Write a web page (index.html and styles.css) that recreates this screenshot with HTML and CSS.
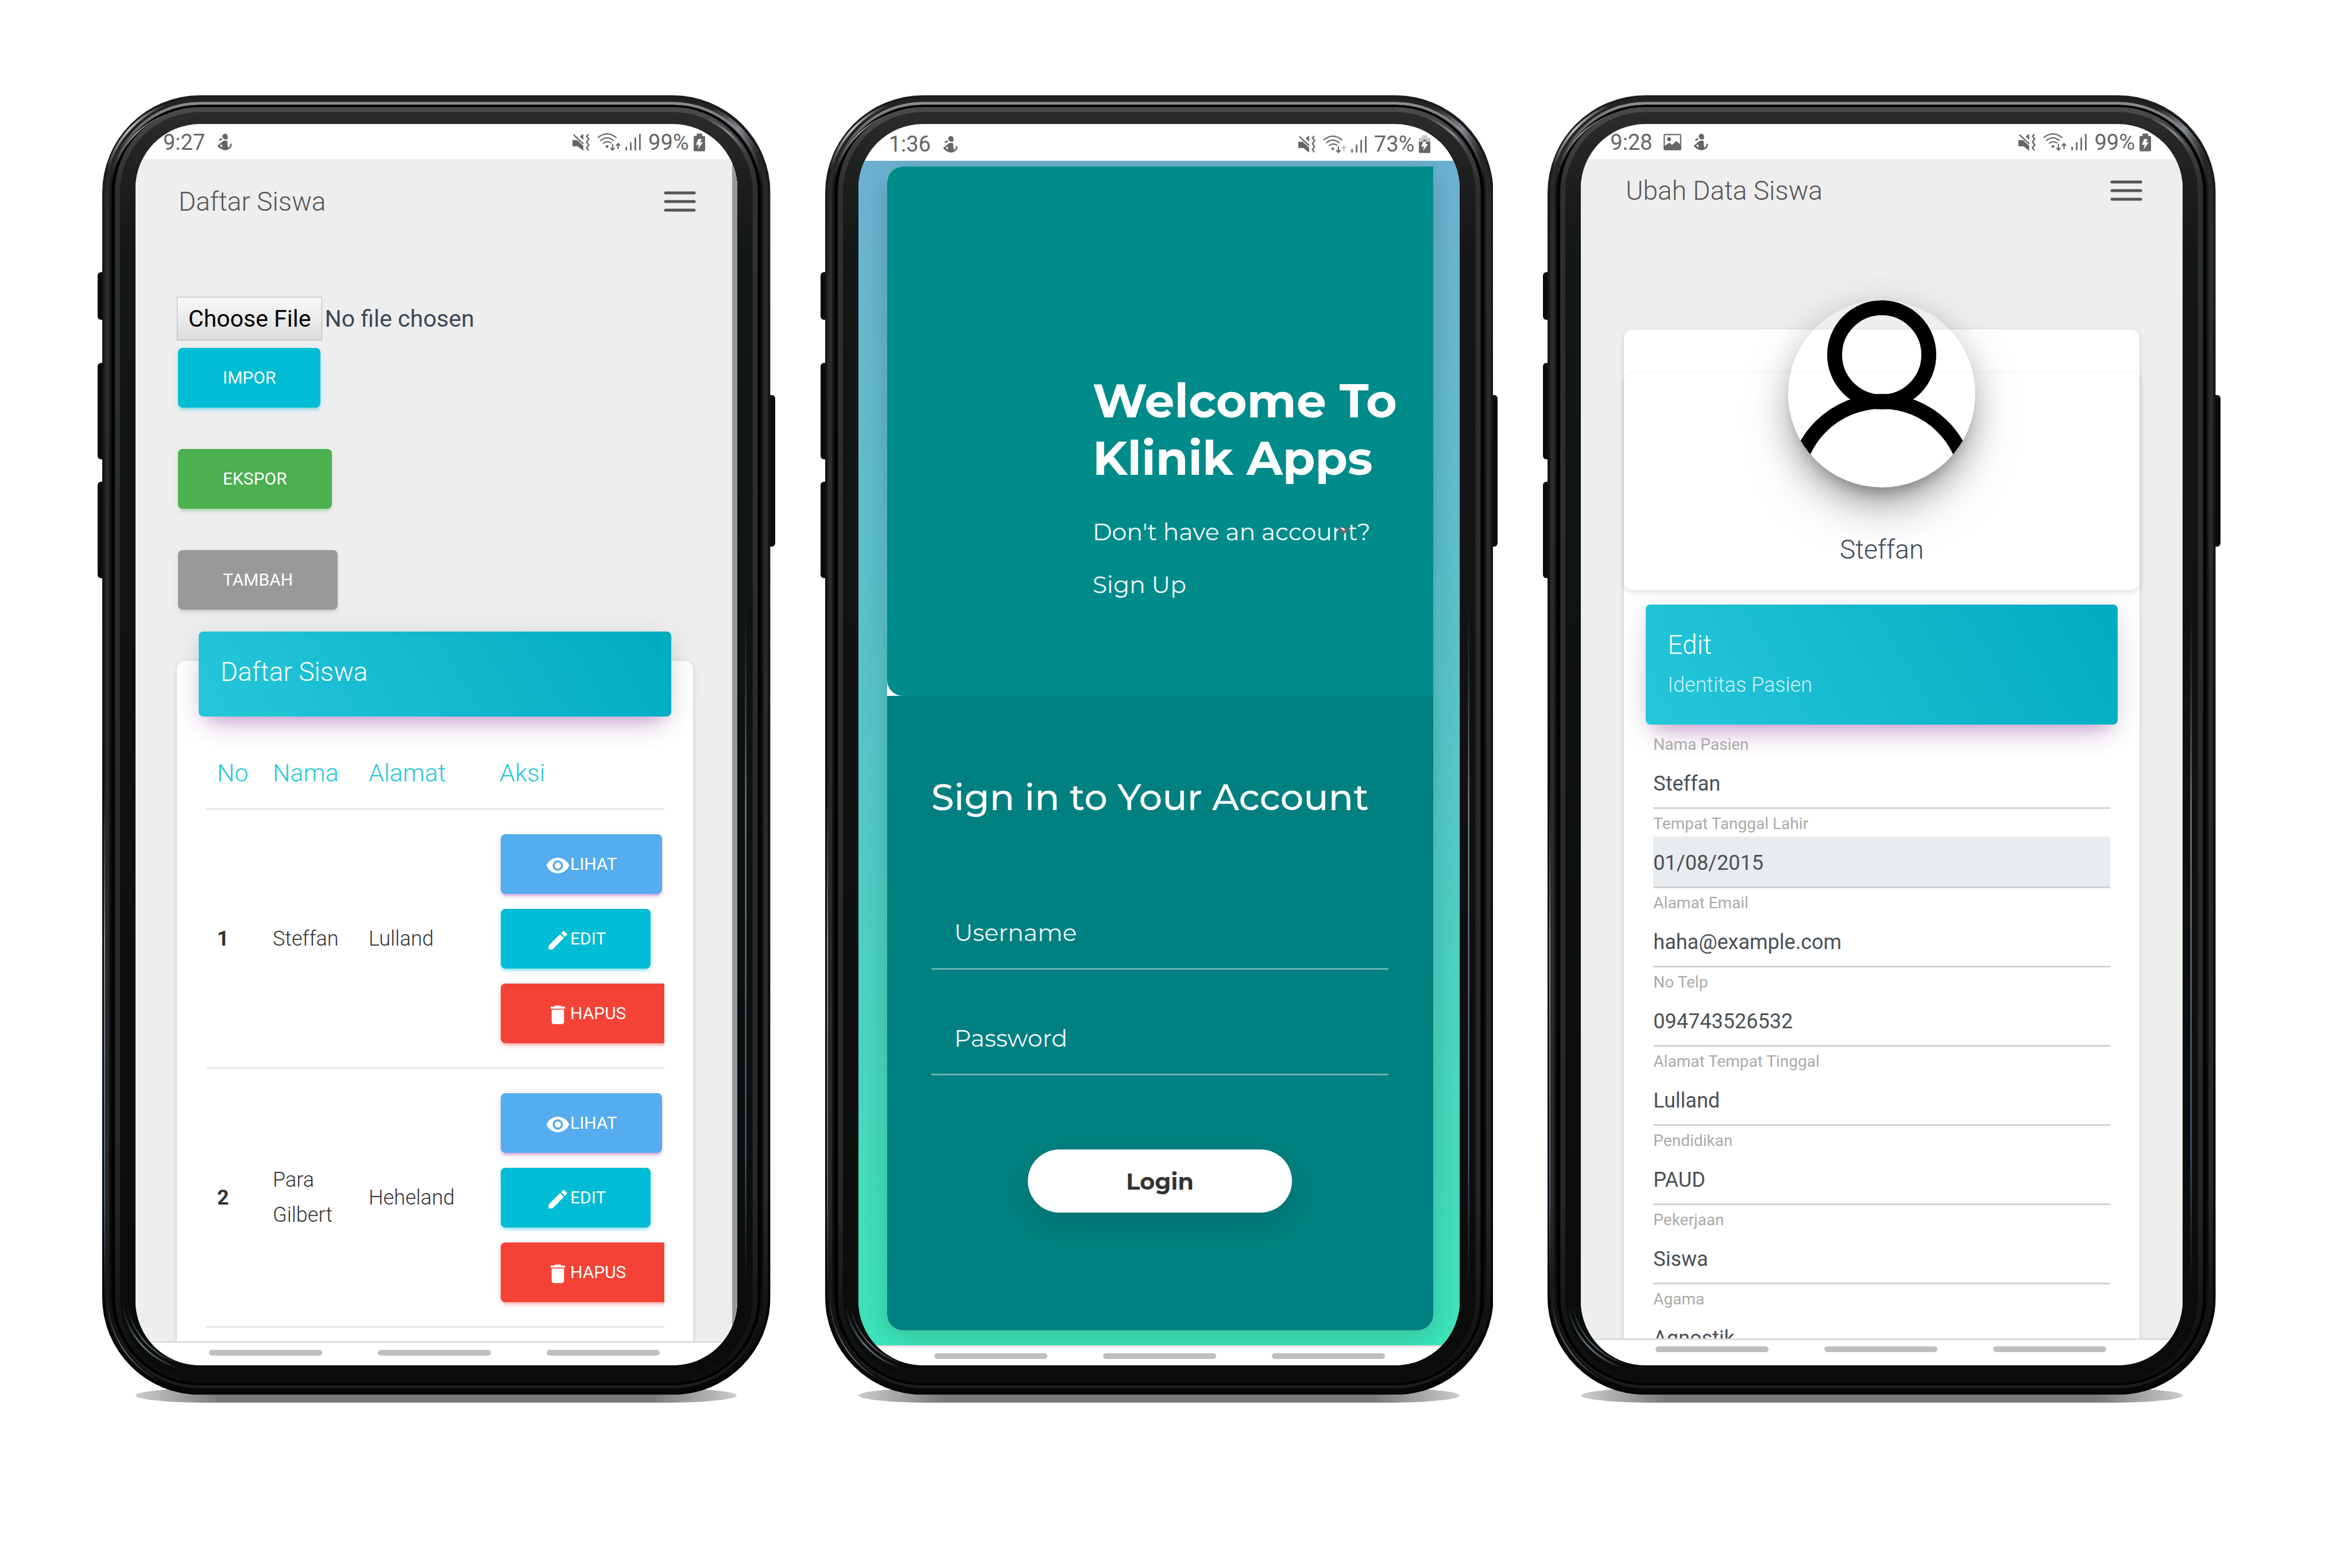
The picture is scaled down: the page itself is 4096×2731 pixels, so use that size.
FILE: index.html
```html
<!DOCTYPE html>
<html lang="id">
<head>
<meta charset="utf-8">
<meta name="viewport" content="width=device-width, initial-scale=1">
<title>Klinik Apps</title>
<link rel="stylesheet" href="styles.css">
</head>
<body>
<svg class="sprite" aria-hidden="true">
  <defs>
    <linearGradient id="g-base" x1="0" y1="0" x2="0" y2="1">
      <stop offset="0" stop-color="#1c1c1c"/><stop offset=".5" stop-color="#0e0f0f"/><stop offset="1" stop-color="#030303"/>
    </linearGradient>
    <linearGradient id="g-rim" x1="0" y1="0" x2="0" y2="1">
      <stop offset="0" stop-color="#222"/><stop offset=".1" stop-color="#2a2b2b"/><stop offset=".85" stop-color="#262828"/><stop offset="1" stop-color="#070707"/>
    </linearGradient>
    <linearGradient id="g-shine" x1="0" y1="0" x2="0" y2="1">
      <stop offset="0" stop-color="#8f8b8c"/><stop offset=".02" stop-color="#6a6869"/><stop offset=".06" stop-color="#151616"/><stop offset=".9" stop-color="#0a0a0a"/><stop offset="1" stop-color="#1d1d1d"/>
    </linearGradient>
    <linearGradient id="g-lip" x1="0" y1="0" x2="0" y2="1">
      <stop offset="0" stop-color="#4a4a4a"/><stop offset=".06" stop-color="#2e3030"/><stop offset=".85" stop-color="#262828"/><stop offset="1" stop-color="#0c0d0d"/>
    </linearGradient>
    <linearGradient id="g-bezel" x1="0" y1="0" x2="0" y2="1">
      <stop offset="0" stop-color="#2c2c2c"/><stop offset=".05" stop-color="#1e1f1f"/><stop offset=".12" stop-color="#131616"/><stop offset="1" stop-color="#0a0c0c"/>
    </linearGradient>
    <linearGradient id="g-corner-r" x1="0" y1="0" x2="1" y2="1">
      <stop offset="0" stop-color="#9aa0a8" stop-opacity="0"/><stop offset=".5" stop-color="#9aa0ac" stop-opacity=".8"/><stop offset="1" stop-color="#5a5f68" stop-opacity="0"/>
    </linearGradient>
    <linearGradient id="g-corner-l" x1="0" y1="1" x2="1" y2="0">
      <stop offset="0" stop-color="#fff" stop-opacity="0"/><stop offset=".5" stop-color="#e8eaee" stop-opacity=".8"/><stop offset="1" stop-color="#fff" stop-opacity="0"/>
    </linearGradient>
    <linearGradient id="g-corner-b" x1="0" y1="0" x2="1" y2="1">
      <stop offset="0" stop-color="#8fa6bf" stop-opacity="0"/><stop offset=".5" stop-color="#a9b8c8" stop-opacity=".6"/><stop offset="1" stop-color="#fff" stop-opacity="0"/>
    </linearGradient>
    <linearGradient id="g-streak" x1="0" y1="0" x2="0" y2="1">
      <stop offset="0" stop-color="#8ea2c8" stop-opacity="0"/><stop offset=".3" stop-color="#c4cbd8" stop-opacity=".7"/><stop offset=".8" stop-color="#6f8cc0" stop-opacity=".7"/><stop offset="1" stop-color="#6f8cc0" stop-opacity="0"/>
    </linearGradient>
  </defs>
  <symbol id="frame" viewBox="0 0 1164 2264" preserveAspectRatio="none">
    <rect width="1164" height="2264" rx="170" fill="url(#g-base)"/>
    <rect x="9" y="9" width="1146" height="2246" rx="161" fill="none" stroke="url(#g-rim)" stroke-width="9"/>
    <rect x="15" y="14" width="1134" height="2236" rx="155" fill="none" stroke="url(#g-shine)" stroke-width="5"/>
    <rect x="19" y="19" width="1126" height="2226" rx="151" fill="none" stroke="#020202" stroke-width="5"/>
    <rect x="27" y="25" width="1110" height="2214" rx="143" fill="none" stroke="url(#g-lip)" stroke-width="9"/>
    <rect x="31" y="29" width="1102" height="2206" rx="139" fill="url(#g-bezel)"/>
    <path d="M1060 24A162 162 0 0 1 1143 110" fill="none" stroke="url(#g-corner-r)" stroke-width="9"/>
    <path d="M1050 40A145 145 0 0 1 1123 105" fill="none" stroke="url(#g-corner-r)" stroke-width="4"/>
    <path d="M9 130A166 166 0 0 1 110 17" fill="none" stroke="url(#g-corner-l)" stroke-width="4"/>
    <path d="M24 120A150 150 0 0 1 112 33" fill="none" stroke="url(#g-corner-l)" stroke-width="2"/>
    <path d="M36 2110A136 136 0 0 0 130 2216" fill="none" stroke="url(#g-corner-b)" stroke-width="3"/>
    <path d="M44 2110A128 128 0 0 0 134 2209" fill="none" stroke="url(#g-corner-b)" stroke-width="2"/>
    <path d="M9 2080A166 166 0 0 0 100 2240" fill="none" stroke="url(#g-corner-b)" stroke-width="2"/>
    <rect x="3" y="1200" width="2" height="900" fill="url(#g-streak)"/>
    <rect x="1120" y="880" width="2" height="1200" fill="url(#g-streak)"/>
  </symbol>
  <symbol id="i-person" viewBox="0 0 82 95">
    <circle cx="44" cy="15" r="15"/><path d="M33 20H60L58 32H40Z"/>
    <ellipse cx="18" cy="32" rx="11" ry="5" transform="rotate(-25 18 32)"/>
    <path fill-rule="evenodd" d="M30 43Q44 34 58 43V62Q58 74 64 78Q72 76 73 61A4.500 4.500 0 0 1 82 61Q82 80 66 87Q50 98 32 92Q12 85 0 69ZM24 59L15 69L27 78Q29 68 24 59Z"/>
  </symbol>
  <symbol id="i-picture" viewBox="0 0 100 93">
    <rect x="4" y="4" width="92" height="85" rx="4" fill="none" stroke="currentColor" stroke-width="7"/>
    <circle cx="31" cy="30" r="11"/><path d="M5 68L34 50L48 63L72 40L96 62V90H5Z"/>
  </symbol>
  <symbol id="i-mute" viewBox="0 0 99 99">
    <path d="M0 36H26L62 69V98L30 72H0Z"/><path d="M42 16L62 0V35Z"/>
    <path d="M6 5L62 58M92 3L81 14L94 30L81 47L94 64L81 80L92 96" fill="none" stroke="currentColor" stroke-width="8" stroke-linejoin="round"/>
  </symbol>
  <symbol id="i-wifi" viewBox="0 0 134 103">
    <g fill="none" stroke="currentColor" stroke-width="7" stroke-linecap="round">
      <path d="M4 25Q56 -17 108 25M19 42Q56 12 92 42M35 58Q56 42 79 56"/>
      <path d="M88 62V98M76 85L88 98L100 85" stroke-linecap="butt"/>
    </g>
    <circle cx="56" cy="77" r="8"/>
  </symbol>
  <symbol id="i-up" viewBox="0 0 134 103">
    <path d="M120 92V60M108 73L120 60L132 73" fill="none" stroke="currentColor" stroke-width="7"/>
  </symbol>
  <symbol id="i-signal" viewBox="0 0 88 95">
    <path d="M5 78V91M31 52V91M57 26V91M83 4V91" fill="none" stroke="currentColor" stroke-width="9" stroke-linecap="round"/>
  </symbol>
  <symbol id="i-battery" viewBox="0 0 67 104">
    <path fill-rule="evenodd" d="M18 0H50V14H61Q67 14 67 20V98Q67 104 61 104H6Q0 104 0 98V20Q0 14 6 14H18ZM27 33L14 66H30L24 92L54 52H38L47 33Z"/>
  </symbol>
  <symbol id="i-battery-part" viewBox="0 0 67 104">
    <path fill="#c8c8c8" d="M18 0H50V14H61Q67 14 67 20V38H0V20Q0 14 6 14H18Z"/>
    <path d="M0 38H67V98Q67 104 61 104H6Q0 104 0 98Z"/><path d="M27 27H46L39 38H23Z"/>
    <path fill="#fff" d="M25 38L14 66H30L24 92L54 52H38L44 38Z"/>
  </symbol>
  <symbol id="i-menu" viewBox="0 0 56 36">
    <path d="M3 3H53M3 18H53M3 33H53" stroke="#555" stroke-width="5" stroke-linecap="round"/>
  </symbol>
  <symbol id="i-eye" viewBox="0 0 24 24"><path d="M12 4.500C7 4.500 2.730 7.610 1 12c1.730 4.390 6 7.500 11 7.500s9.270-3.110 11-7.500c-1.730-4.390-6-7.500-11-7.500zM12 17c-2.760 0-5-2.240-5-5s2.240-5 5-5 5 2.240 5 5-2.240 5-5 5zm0-8c-1.660 0-3 1.340-3 3s1.340 3 3 3 3-1.340 3-3-1.340-3-3-3z"/></symbol>
  <symbol id="i-pen" viewBox="0 0 24 24"><path d="M3 17.250V21h3.750L17.810 9.940l-3.750-3.750L3 17.250zM20.710 7.040c.39-.39.39-1.020 0-1.410l-2.340-2.340c-.39-.39-1.020-.39-1.410 0l-1.830 1.830 3.750 3.750 1.830-1.830z"/></symbol>
  <symbol id="i-bin" viewBox="0 0 24 24"><path d="M6 19c0 1.100.9 2 2 2h8c1.100 0 2-.9 2-2V7H6v12zM19 4h-3.500l-1-1h-5l-1 1H5v2h14V4z"/></symbol>
</svg>

<main class="stage">

  <section class="phone" aria-label="Daftar Siswa">
    <span class="ground"></span><span class="key key-a"></span><span class="key key-b"></span><span class="key key-c"></span><span class="key key-d"></span>
    <svg class="frame"><use href="#frame"/></svg>
    <div class="screen">
      <div class="status">
        <span>9:27</span>
        <svg class="ic-person"><use href="#i-person"/></svg>
        <div class="status-right">
          <svg class="ic-mute"><use href="#i-mute"/></svg>
          <svg class="ic-wifi"><use href="#i-wifi"/><use href="#i-up"/></svg>
          <svg class="ic-signal"><use href="#i-signal"/></svg>
          <span>99%</span>
          <svg class="ic-battery"><use href="#i-battery"/></svg>
        </div>
      </div>
      <div class="view view-list">
        <header class="bar bar-tall">
          <h1 class="bar-title">Daftar Siswa</h1>
          <button class="menu" type="button" aria-label="Menu"><svg><use href="#i-menu"/></svg></button>
        </header>
        <div class="tools">
          <input class="file" type="file" aria-label="File">
          <button class="btn btn-cyan" type="button">IMPOR</button>
          <button class="btn btn-green" type="button">EKSPOR</button>
          <button class="btn btn-grey" type="button">TAMBAH</button>
        </div>
        <div class="card list-card">
          <div class="card-head"><h2>Daftar Siswa</h2></div>
          <div class="table-wrap">
            <table class="table">
              <colgroup><col class="c-no"><col class="c-name"><col class="c-addr"><col class="c-act"></colgroup>
              <thead><tr><th>No</th><th>Nama</th><th>Alamat</th><th>Aksi</th></tr></thead>
              <tbody>
                <tr>
                  <td class="num">1</td><td>Steffan</td><td>Lulland</td>
                  <td><div class="acts">
                    <button class="btn btn-blue" type="button"><svg><use href="#i-eye"/></svg>LIHAT</button>
                    <button class="btn btn-cyan" type="button"><svg><use href="#i-pen"/></svg>EDIT</button>
                    <button class="btn btn-red" type="button"><svg><use href="#i-bin"/></svg>HAPUS</button>
                  </div></td>
                </tr>
                <tr>
                  <td class="num">2</td><td>Para Gilbert</td><td>Heheland</td>
                  <td><div class="acts">
                    <button class="btn btn-blue" type="button"><svg><use href="#i-eye"/></svg>LIHAT</button>
                    <button class="btn btn-cyan" type="button"><svg><use href="#i-pen"/></svg>EDIT</button>
                    <button class="btn btn-red" type="button"><svg><use href="#i-bin"/></svg>HAPUS</button>
                  </div></td>
                </tr>
              </tbody>
            </table>
          </div>
        </div>
      </div>
      <div class="nav nav-list"><i></i><i></i><i></i></div>
    </div>
  </section>

  <section class="phone" aria-label="Login">
    <span class="ground"></span><span class="key key-a"></span><span class="key key-b"></span><span class="key key-c"></span><span class="key key-d"></span>
    <svg class="frame"><use href="#frame"/></svg>
    <div class="screen">
      <div class="status status-low">
        <span>1:36</span>
        <svg class="ic-person"><use href="#i-person"/></svg>
        <div class="status-right">
          <svg class="ic-mute"><use href="#i-mute"/></svg>
          <svg class="ic-wifi"><use href="#i-wifi"/><use class="faint" href="#i-up"/></svg>
          <svg class="ic-signal"><use href="#i-signal"/></svg>
          <span>73%</span>
          <svg class="ic-battery"><use href="#i-battery-part"/></svg>
        </div>
      </div>
      <div class="view view-login">
        <div class="login">
          <div class="hero">
            <h1>Welcome To<br>Klinik Apps</h1>
            <p>Don't have an account?<svg class="caret" viewBox="0 0 24 16"><path d="M2 2L12 12L22 2" fill="none" stroke="#7a6266" stroke-width="4"/></svg></p>
            <a href="#signup">Sign Up</a>
          </div>
          <form class="signin">
            <h2>Sign in to Your Account</h2>
            <input type="text" placeholder="Username" aria-label="Username">
            <input type="password" placeholder="Password" aria-label="Password">
            <button type="button">Login</button>
          </form>
        </div>
      </div>
      <div class="nav nav-login"><i></i><i></i><i></i></div>
    </div>
  </section>

  <section class="phone" aria-label="Ubah Data Siswa">
    <span class="ground"></span><span class="key key-a"></span><span class="key key-b"></span><span class="key key-c"></span><span class="key key-d"></span>
    <svg class="frame"><use href="#frame"/></svg>
    <div class="screen">
      <div class="status status-edit">
        <span>9:28</span>
        <svg class="ic-picture"><use href="#i-picture"/></svg>
        <svg class="ic-person"><use href="#i-person"/></svg>
        <div class="status-right">
          <svg class="ic-mute"><use href="#i-mute"/></svg>
          <svg class="ic-wifi"><use href="#i-wifi"/><use href="#i-up"/></svg>
          <svg class="ic-signal"><use href="#i-signal"/></svg>
          <span>99%</span>
          <svg class="ic-battery"><use href="#i-battery"/></svg>
        </div>
      </div>
      <div class="view view-edit">
        <header class="bar">
          <h1 class="bar-title">Ubah Data Siswa</h1>
          <button class="menu" type="button" aria-label="Menu"><svg><use href="#i-menu"/></svg></button>
        </header>
        <div class="card edit-card">
          <div class="card profile">
            <svg class="avatar" viewBox="0 0 326 326" role="img" aria-label="Steffan">
              <g fill="none" stroke="#000" stroke-width="26"><circle cx="163" cy="95" r="82"/><circle cx="163" cy="326" r="150"/></g>
            </svg>
            <h2>Steffan</h2>
          </div>
          <div class="card-head"><h2>Edit</h2><p>Identitas Pasien</p></div>
          <form class="fields">
            <label for="f1">Nama Pasien</label><input id="f1" type="text" value="Steffan">
            <label for="f2">Tempat Tanggal Lahir</label><input id="f2" type="text" value="01/08/2015" readonly>
            <label for="f3">Alamat Email</label><input id="f3" type="email" value="haha@example.com">
            <label for="f4">No Telp</label><input id="f4" type="tel" value="094743526532">
            <label for="f5">Alamat Tempat Tinggal</label><input id="f5" type="text" value="Lulland">
            <label for="f6">Pendidikan</label><input id="f6" type="text" value="PAUD">
            <label for="f7">Pekerjaan</label><input id="f7" type="text" value="Siswa">
            <label for="f8">Agama</label><input id="f8" type="text" value="Agnostik">
          </form>
        </div>
      </div>
      <div class="nav nav-edit"><i></i><i></i><i></i></div>
    </div>
  </section>

</main>
</body>
</html>
```
FILE: styles.css
```css
* { box-sizing: border-box; }
body { margin: 0; background: #fff; font-family: Roboto, "Liberation Sans", sans-serif; color: #3c4858; }
h1, h2, p { margin: 0; font-weight: 300; }
button, input { font-family: inherit; margin: 0; }
button { border: 0; }
svg { display: block; flex: none; fill: currentColor; }
.sprite { position: absolute; width: 0; height: 0; }

.stage {
  display: grid;
  grid-template-columns: repeat(3, minmax(0, 1fr));
  gap: 95px;
  align-items: start;
  min-height: 100vh;
  padding: 166px 237px 40px 178px;
}

/* Device */
.phone {
  position: relative;
  isolation: isolate;
  display: flex;
  aspect-ratio: 1164 / 2264;
  min-height: 0;
  padding: 50px 58px 51px;
}
.frame { position: absolute; inset: 0; z-index: -1; width: 100%; height: 100%; }
.ground {
  position: absolute; z-index: -2; left: 5%; right: 5%; top: 99.5%; height: 25px;
  border-radius: 12% / 50%;
  background: linear-gradient(90deg, #ccc, #7a7a7a 14%, #7a7a7a 86%, #ccc);
}
.key { position: absolute; z-index: -2; left: -8px; width: 20px; border-radius: 6px; background: #0b0b0b; }
.key-a { top: 308px; height: 83px; }
.key-b { top: 466px; height: 168px; }
.key-c { top: 673px; height: 168px; }
.key-d { top: 522px; height: 264px; left: auto; right: -8px; }
.screen {
  position: relative;
  flex: 1;
  min-width: 0;
  display: flex;
  flex-direction: column;
  overflow: hidden;
  border-radius: 112px;
  background: #fff;
}

/* Status bar */
.status {
  flex: none;
  display: flex;
  align-items: center;
  height: 61px;
  padding: 2px 56px 0 48px;
  font-size: 38px;
  line-height: 44px;
  color: #666;
}
.status-low { height: 64px; padding: 6px 51px 0 53px; }
.status-edit { padding: 2px 55px 0 51px; }
.status-right { display: flex; align-items: center; margin-left: auto; }
.ic-person { width: 26px; height: 29px; margin-left: 21px; }
.ic-picture { width: 31px; height: 29px; margin-left: 19px; }
.ic-mute { width: 30px; height: 30px; }
.ic-wifi { width: 41px; height: 31px; margin-left: 13px; }
.ic-signal { width: 27px; height: 29px; margin: 0 13px 0 8px; }
.ic-battery { width: 20px; height: 32px; margin-left: 8px; }
.faint { color: #c0c0c0; }

.view { flex: 1; min-height: 0; overflow: hidden; background: #eee; }
.view-list { border-right: 9px solid #999; }

/* Title bar */
.bar { display: flex; align-items: center; justify-content: space-between; height: 110px; padding: 0 70px 0 78px; }
.bar-tall { height: 147px; padding: 0 63px 0 75px; }
.bar-title { font-size: 46px; line-height: 60px; color: #555; }
.menu { padding: 0; background: none; }
.menu svg { width: 56px; height: 36px; }

/* Buttons */
.btn {
  display: flex;
  align-items: center;
  height: 104px;
  padding: 0 78px;
  border-radius: 8px;
  font-size: 30px;
  line-height: 40px;
  color: #fff;
}
.btn svg { width: 43px; height: 43px; margin-top: 4px; }
.btn-cyan { background: #00bcd4; box-shadow: 0 5px 5px rgba(0,188,212,.14), 0 8px 3px -5px rgba(0,188,212,.2), 0 3px 13px rgba(0,188,212,.12); }
.btn-green { background: #4caf50; box-shadow: 0 5px 5px rgba(76,175,80,.14), 0 8px 3px -5px rgba(76,175,80,.2), 0 3px 13px rgba(76,175,80,.12); }
.btn-grey { background: #999; box-shadow: 0 5px 5px rgba(153,153,153,.14), 0 8px 3px -5px rgba(153,153,153,.2), 0 3px 13px rgba(153,153,153,.12); }
.btn-blue { background: #55acee; box-shadow: 0 5px 5px rgba(156,39,176,.14), 0 8px 3px -5px rgba(156,39,176,.2), 0 3px 13px rgba(156,39,176,.12); }
.btn-red { background: #f44336; box-shadow: 0 5px 5px rgba(244,67,54,.14), 0 8px 3px -5px rgba(244,67,54,.2), 0 3px 13px rgba(244,67,54,.12); }

.tools { display: flex; flex-direction: column; align-items: flex-start; gap: 72px; padding: 93px 0 0 74px; }
.file { height: 76px; margin: 0 0 -59px -2px; font-size: 41px; line-height: 74px; color: #3c4858; }
.file::file-selector-button {
  height: 76px;
  padding: 0 19px;
  border: 1px solid #b4b4b4;
  background: linear-gradient(#f8f8f8, #ddd);
  font: inherit;
  color: #000;
}

/* Cards */
.card { border-radius: 15px; background: #fff; box-shadow: 0 3px 10px rgba(0,0,0,.14); }
.list-card { display: flex; flex-direction: column; margin: 89px 68px 0 72px; padding-bottom: 100px; }
.edit-card { margin: 187px 75px 0; padding: 76px 0 100px; }
.card-head {
  margin: 0 38px;
  padding: 40px 38px;
  border-radius: 8px;
  background: linear-gradient(60deg, #26c6da, #00acc1);
  box-shadow: 0 30px 50px -25px rgba(156,39,176,.28), 0 10px 50px rgba(0,0,0,.12), 0 18px 20px -13px rgba(156,39,176,.2);
  color: #fff;
}
.card-head h2 { font-size: 46px; line-height: 60px; }
.card-head p { font-size: 36px; line-height: 80px; color: rgba(255,255,255,.8); }
.list-card .card-head { height: 148px; margin-top: -51px; }
.edit-card .card-head { height: 209px; margin-top: 25px; }

/* Table */
.table-wrap { margin: 0 50px 0 51px; padding-top: 36px; overflow: hidden; }
.table { width: 100%; table-layout: fixed; border-collapse: separate; border-spacing: 0; color: #333; }
.c-no { width: 97px; }
.c-name { width: 167px; }
.c-addr { width: 228px; }
.table th { padding: 30px 19px; font-size: 43px; line-height: 64px; font-weight: 300; text-align: left; color: #26c6da; }
.table td { padding: 43px 19px 42px; border-top: 2px solid #ddd; font-size: 36px; line-height: 61px; font-weight: 300; vertical-align: middle; }
.table tr:last-child td { border-bottom: 2px solid #ddd; }
.table td.num { font-weight: 700; }
.acts { display: flex; flex-direction: column; align-items: flex-start; gap: 26px; margin-left: 2px; }

/* Navigation strip */
.nav { flex: none; display: flex; gap: 97px; border-top: 3px solid #ddd; background: #fff; }
.nav i { width: 197px; height: 10px; border-radius: 5px; background: #bfbfbf; }
.nav-list { height: 42px; padding: 12px 0 0 128px; }
.nav-login { height: 35px; padding: 11px 0 0 132px; }
.nav-edit { height: 47px; padding: 11px 0 0 130px; }

/* Login */
.view-login { display: flex; padding: 10px 46px 26px 50px; background: linear-gradient(#6db1d2, #52cac6 55%, #3ce6ba); }
.login {
  flex: 1;
  min-width: 0;
  display: flex;
  flex-direction: column;
  overflow: hidden;
  border-radius: 27px 0 27px 27px;
  background: #fff;
  box-shadow: 0 10px 50px rgba(0,0,0,.18);
  font-family: Montserrat, Inter, "Open Sans", sans-serif;
  color: #fff;
}
.hero { height: 922px; padding: 358px 0 0 358px; border-radius: 27px 0 0 27px; background: #008b8b; }
.hero h1 { margin-bottom: 32px; font-size: 82px; line-height: 100px; font-weight: 700; }
.hero p, .hero a { display: block; font-size: 41px; line-height: 92px; font-weight: 400; color: inherit; text-decoration: none; opacity: .95; }
.hero p { position: relative; }
.caret { position: absolute; left: 425px; top: 36px; width: 24px; height: 16px; }
.signin { flex: 1; display: flex; flex-direction: column; padding: 131px 78px 0 77px; background: #008080; }
.signin h2 { margin-bottom: 130px; font-size: 64px; line-height: 90px; font-weight: 500; white-space: nowrap; }
.signin input {
  height: 126px;
  margin-bottom: 58px;
  padding: 0 40px 2px;
  border: 0;
  border-bottom: 3px solid rgba(255,255,255,.4);
  background: none;
  font-size: 41px;
  color: #fff;
}
.signin input::placeholder { color: #fff; opacity: .92; }
.signin button {
  align-self: center;
  width: 460px;
  height: 110px;
  margin-top: 71px;
  border-radius: 55px;
  background: #fff;
  box-shadow: 0 20px 50px rgba(0,0,0,.12);
  font-size: 40px;
  font-weight: 700;
  color: #333;
}

/* Profile */
.profile { display: flex; flex-direction: column; align-items: center; height: 378px; }
.avatar { width: 326px; height: 326px; margin-top: -127px; border-radius: 50%; box-shadow: 0 40px 96px -30px rgba(0,0,0,.56), 0 10px 63px rgba(0,0,0,.12), 0 20px 25px -13px rgba(0,0,0,.2); }
.profile h2 { margin-top: 78px; font-size: 46px; line-height: 60px; }

.fields { display: flex; flex-direction: column; padding: 9px 51px 0; }
.fields label { padding-top: 4px; font-size: 28px; line-height: 44px; color: #aaa; }
.fields input {
  height: 90px;
  padding: 4px 0 0;
  border: 0;
  border-bottom: 3px solid #d2d2d2;
  background: none;
  font-size: 36px;
  color: #495057;
}
.fields input[readonly] { background: #e9ecef; }
```
